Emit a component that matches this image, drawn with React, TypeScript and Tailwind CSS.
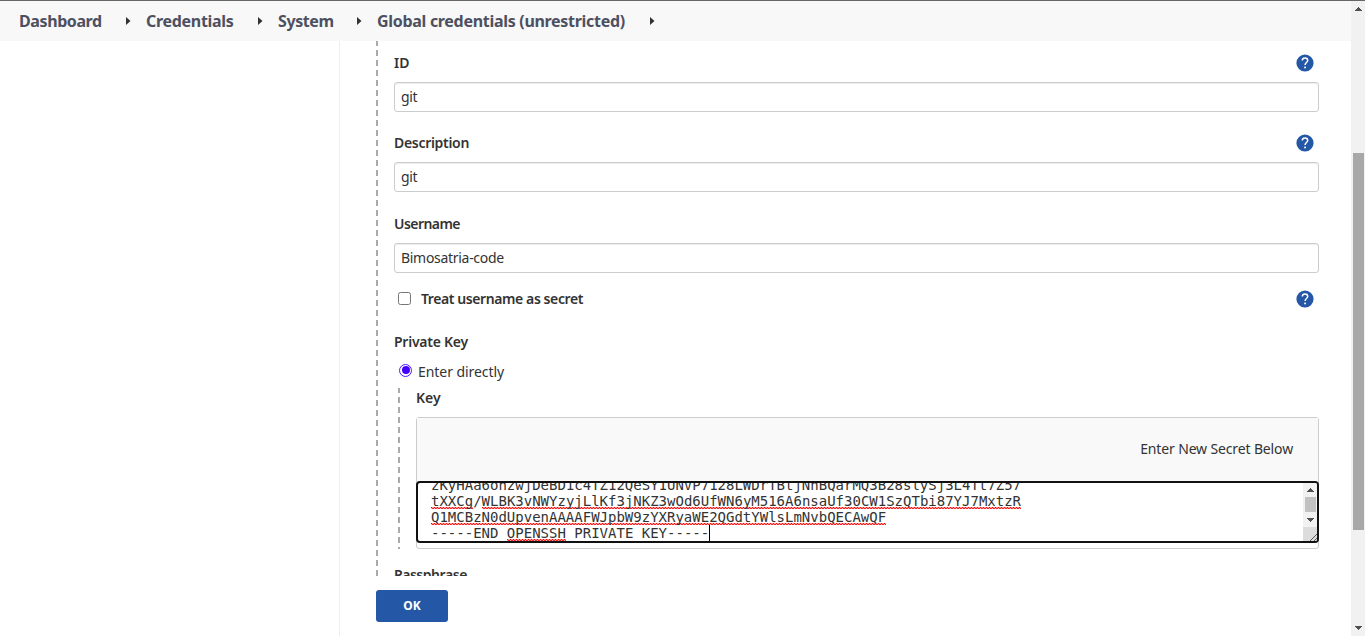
import React from "react";

const Crumb = ({ children, className }: { children: string; className: string }) => (
  <div className={`flex shrink-0 items-center justify-between whitespace-nowrap ${className}`}>
    <a className="text-[16px] leading-6 font-bold text-[#4d5060]">{children}</a>
    <svg width="5" height="8" viewBox="0 0 5 8" fill="#333">
      <path d="M0 0L4.5 4L0 8Z" />
    </svg>
  </div>
);

const Help = () => (
  <svg className="mr-[5px] shrink-0" width="18" height="18" viewBox="0 0 18 18">
    <circle cx="9" cy="9" r="8.6" fill="#2458a6" />
    <path
      d="M6.3 6.6C6.3 4.9 7.5 4 9 4s2.7 1 2.7 2.5c0 2-2.6 2.1-2.6 4.4"
      fill="none"
      stroke="#fff"
      strokeWidth="1.5"
    />
    <rect x="8.2" y="12.6" width="1.7" height="1.7" fill="#fff" />
  </svg>
);

const Label = ({ children, help = false, className = "" }: { children: string; help?: boolean; className?: string }) => (
  <div className={`flex h-[18px] items-center justify-between text-[14px] leading-[18px] font-semibold whitespace-nowrap text-[#333] ${className}`}>
    <span>{children}</span>
    {help && <Help />}
  </div>
);

const Field = ({ value }: { value: string }) => (
  <div className="flex h-[30px] w-[925px] items-center rounded-[3px] border border-[#ccc] bg-white pb-[2px] pl-[6px] text-[14px] tracking-[-0.3px] text-[#333] shadow-[inset_0_1px_1px_rgba(0,0,0,0.075)]">
    {value}
  </div>
);

const Arrow = ({ down = false }: { down?: boolean }) => (
  <svg width="7" height="4" viewBox="0 0 7 4" fill="#505050" shapeRendering="crispEdges">
    <path d={down ? "M0 0H7V1H6V2H5V3H4V4H3V3H2V2H1V1H0Z" : "M0 4H7V3H6V2H5V1H4V0H3V1H2V2H1V3H0Z"} />
  </svg>
);

const Misspelt = ({ children }: { children: string }) => (
  <span className="inline-block h-4 bg-[image:repeating-linear-gradient(90deg,#f00_0_1px,#ff9a9a_1px_3px),repeating-linear-gradient(90deg,#ffb0b0_0_1px,#f22_1px_3px)] bg-[position:0_14px,0_15px] bg-[size:100%_1px] bg-no-repeat align-top">
    {children}
  </span>
);

export default function App() {
  return (
    <div className="flex h-[636px] w-[1365px] overflow-hidden border-t border-[#68656a] bg-white font-['Noto_Sans',sans-serif]">
      <div className="flex w-[1351px] flex-col">
        <header className="flex h-10 shrink-0 items-center bg-[#f8f8f8] pl-[19px]">
          <Crumb className="mr-[15px] w-[112px] tracking-[-0.4px]">Dashboard</Crumb>
          <Crumb className="mr-[15px] w-[117px] tracking-[-0.3px]">Credentials</Crumb>
          <Crumb className="mr-[15px] w-[84px] tracking-[-0.4px]">System</Crumb>
          <Crumb className="w-[278px] tracking-[-0.3px]">Global credentials (unrestricted)</Crumb>
        </header>

        <div className="flex flex-1">
          <aside className="w-[340px] border-r border-[#eee]" />
          <main className="flex-1 pl-9">
            <div className="flex h-[535px] overflow-hidden">
              <div className="w-[2px] shrink-0 bg-[repeating-linear-gradient(180deg,#aaa_0_5px,transparent_5px_9px,#aaa_9px_10px)]" />
              <form className="ml-4 w-[925px] shrink-0 pt-[13px]">
                <Label help>ID</Label>
                <div className="mt-[10px]"><Field value="git" /></div>
                <Label help className="mt-[22px] tracking-[-0.3px]">Description</Label>
                <div className="mt-[10px]"><Field value="git" /></div>
                <Label className="mt-[23px] tracking-[-0.55px]">Username</Label>
                <div className="mt-[10px]"><Field value="Bimosatria-code" /></div>

                <div className="mt-[17px] flex h-[18px] items-center pl-1">
                  <span className="mr-[10px] mb-[2px] h-[13px] w-[13px] shrink-0 rounded-[2.5px] border border-[#767676] bg-white" />
                  <Label help className="flex-1 tracking-[-0.41px]">Treat username as secret</Label>
                </div>

                <Label className="mt-[25px] tracking-[-0.25px]">Private Key</Label>
                <div className="mt-[11px] flex h-[18px] items-center pl-[5px] text-[14px] tracking-[-0.06px] text-[#333]">
                  <span className="mr-[6px] mb-[2px] flex h-[13px] w-[13px] shrink-0 items-center justify-center rounded-full border border-[#4a1cff] bg-white">
                    <span className="h-2 w-2 rounded-full bg-[#4400ff]" />
                  </span>
                  <span>Enter directly</span>
                </div>

                <div className="mt-[8px] flex h-[161px] pl-1">
                  <div className="w-[2px] shrink-0 bg-[repeating-linear-gradient(180deg,#aaa_0_5px,transparent_5px_9px,#aaa_9px_10px)]" />
                  <div className="ml-4 w-[903px]">
                    <Label className="mt-[1px]">Key</Label>
                    <div className="mt-[10px] h-[132px] rounded-[3px] border border-[#ccc] bg-white">
                      <div className="flex h-[63px] items-center justify-end bg-[#f9f9f9] pr-[25px] pb-[2px] text-[14px] tracking-[-0.14px] text-[#333]">
                        <span>Enter New Secret Below</span>
                      </div>
                      <div className="-mx-px flex h-[62px] overflow-hidden rounded-[4px] border-2 border-[#111]">
                        <div className="flex flex-1 flex-col justify-end pl-[13px] font-['DejaVu_Sans_Mono',monospace] text-[14px] leading-4 whitespace-pre text-[#333]">
                          <div className="h-4">zKyHAa6ohzwjDeBD1c4TZ12QeSY1UNVP7128LWDrTBtjNhBQarMQ3B28slySj3L4Tt7Z57</div>
                          <div className="h-4"><Misspelt>tXXCg</Misspelt>/<Misspelt>WLBK3vNWYzyjLlKf3jNKZ3wOd6UfWN6yM516A6nsaUf30CW1SzQTbi87YJ7MxtzR</Misspelt></div>
                          <div className="h-4"><Misspelt>Q1MCBzN0dUpvenAAAAFWJpbW9zYXRyaWE2QGdtYWlsLmNvbQECAwQF</Misspelt></div>
                          <div className="flex h-4">-----END <Misspelt>OPENSSH</Misspelt> PRIVATE KEY-----<span className="h-4 w-px bg-black" /></div>
                        </div>
                        <div className="flex w-[14px] flex-col bg-[#f1f1f1]">
                          <div className="flex h-[14px] items-center justify-center"><Arrow /></div>
                          <div className="ml-[2px] h-[15px] w-[11px] bg-[#c1c1c1]" />
                          <div className="flex h-[15px] items-center justify-center"><Arrow down /></div>
                          <svg className="bg-[#dcdcdc]" width="14" height="14" viewBox="0 0 14 14" stroke="#555">
                            <path d="M7 14L14 7M11 14L14 11" />
                          </svg>
                        </div>
                      </div>
                    </div>
                  </div>
                </div>
                <Label className="mt-[17px] tracking-[-0.45px]">Passphrase</Label>
              </form>
            </div>
            <button className="mt-[14px] flex h-8 w-[72px] items-center justify-center rounded-[3px] bg-[#2458a6] text-[12px] font-bold text-white">OK</button>
          </main>
        </div>
      </div>

      <div className="flex w-[14px] flex-col items-center bg-[#f1f1f1]">
        <div className="flex h-[152px] pt-[6px]"><Arrow /></div>
        <div className="ml-px h-[377px] w-[11px] bg-[#a8a8a8]" />
        <div className="mt-auto pb-[6px]"><Arrow down /></div>
      </div>
    </div>
  );
}
